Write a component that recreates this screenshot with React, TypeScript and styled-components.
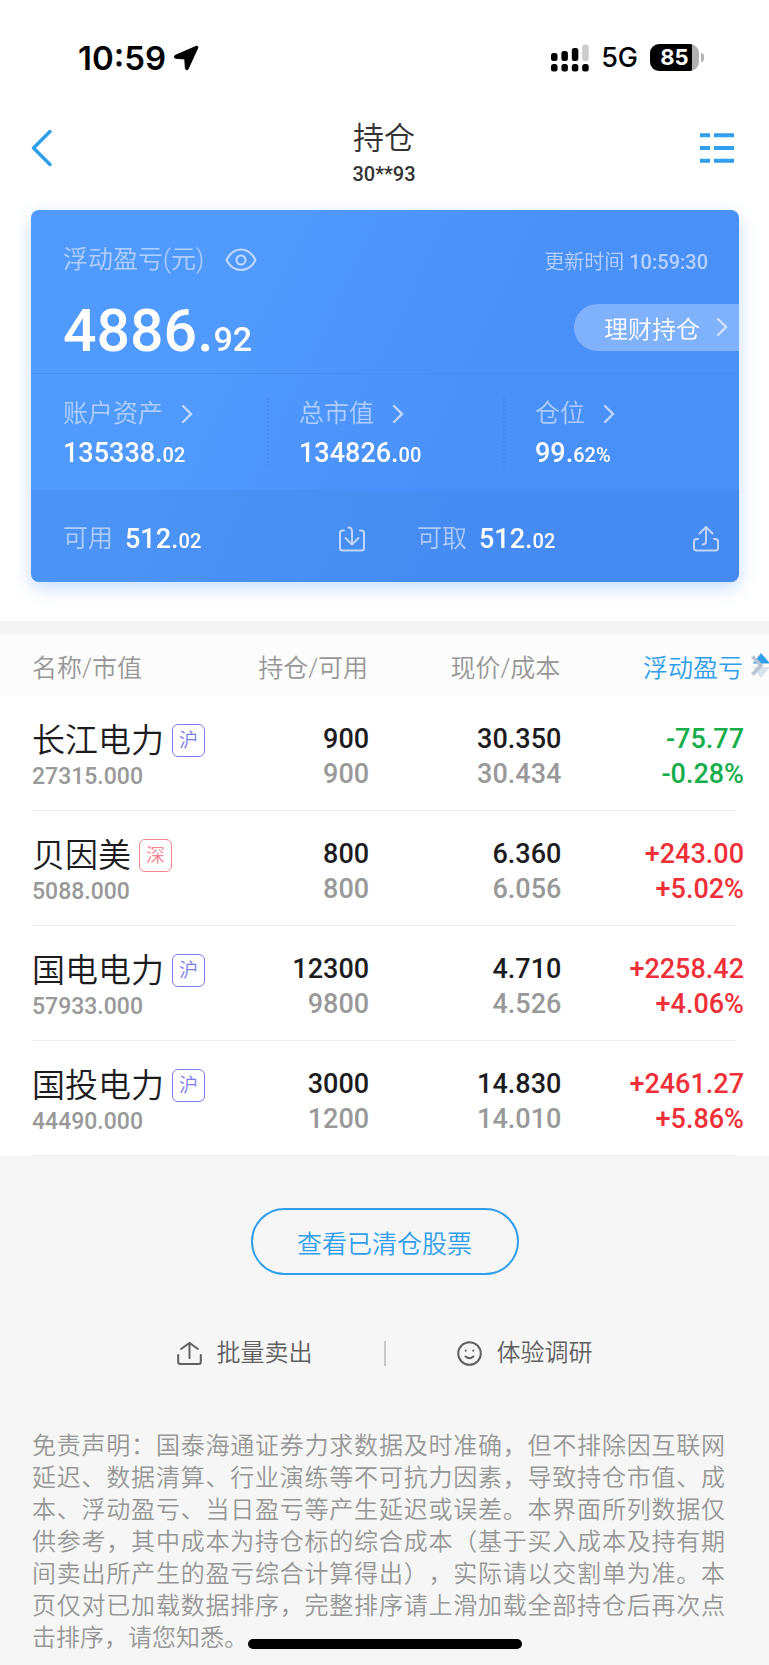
import React from "react";
import styled, { createGlobalStyle } from "styled-components";

const GlobalStyle = createGlobalStyle`
  *, *::before, *::after { box-sizing: border-box; }
  body {
    margin: 0;
    background: #f6f6f6;
    color: #1c1c1e;
    font-family: Roboto, "Noto Sans CJK SC", sans-serif;
    font-weight: 350;
  }
  button {
    margin: 0;
    padding: 0;
    border: 0;
    background: none;
    font: inherit;
    color: inherit;
    cursor: pointer;
  }
  a { color: inherit; text-decoration: none; }
  svg { display: block; flex: none; }
`;

const Page = styled.div`
  min-height: 100vh;
`;

const Top = styled.div`
  background: #fff;
  padding-bottom: 39px;
  border-bottom: 13px solid #f5f5f5;
`;

const StatusBar = styled.div`
  height: 106px;
  padding: 9px 65px 0 78px;
  display: flex;
  align-items: center;
  justify-content: space-between;
  color: #000;
  font-family: Inter, sans-serif;
`;

const StatusGroup = styled.div<{ $gap: number }>`
  display: flex;
  align-items: center;
  gap: ${(p) => p.$gap}px;
`;

const Clock = styled.span`
  font-size: 33px;
  font-weight: 600;
`;

const Network = styled.span`
  font-size: 27px;
  font-weight: 500;
`;

const Battery = styled.div`
  display: flex;
  align-items: center;
  gap: 2px;
  &::after {
    content: "";
    width: 3px;
    height: 9px;
    border-radius: 0 4px 4px 0;
    background: #b5b5b5;
  }
`;

const BatteryBody = styled.div`
  width: 49px;
  height: 27px;
  border-radius: 9px;
  background: linear-gradient(90deg, #000 42px, #b0b0b0 42px);
  color: #fff;
  font-size: 22px;
  line-height: 27px;
  font-weight: 700;
  text-align: center;
`;

const NavBar = styled.header`
  height: 104px;
  padding: 0 32px 20px 31px;
  display: grid;
  grid-template-columns: 1fr auto 1fr;
  align-items: center;
`;

const BackButton = styled.button`
  justify-self: start;
`;

const MenuButton = styled.button`
  justify-self: end;
  margin-right: 3px;
`;

const NavTitle = styled.div`
  padding-top: 14px;
  text-align: center;
  color: #333;
`;

const Title = styled.h1`
  margin: 0;
  font-size: 31px;
  line-height: 38px;
  font-weight: 350;
`;

const Account = styled.div`
  font-size: 20px;
  line-height: 32px;
  font-weight: 500;
`;

const Card = styled.section`
  margin: 0 30px 0 31px;
  border-radius: 8px;
  overflow: hidden;
  color: #fff;
  background: linear-gradient(115deg, #5099fd 30%, #4990f9 65%);
`;

const CardShadow = styled.div`
  filter: drop-shadow(0 6px 9px rgba(73, 144, 249, 0.3));
`;

const Summary = styled.div`
  height: 164px;
  padding: 32px 0 0 32px;
  border-bottom: 1px solid #478cf0;
`;

const SummaryHead = styled.div`
  height: 36px;
  padding-right: 31px;
  display: flex;
  align-items: center;
  justify-content: space-between;
`;

const Label = styled.span`
  font-size: 25px;
  line-height: 36px;
  color: rgba(255, 255, 255, 0.55);
`;

const LabelRow = styled.div<{ $gap: number }>`
  display: flex;
  align-items: center;
  gap: ${(p) => p.$gap}px;
`;

const Updated = styled.span`
  font-size: 20px;
  color: rgba(255, 255, 255, 0.6);
  time { font-weight: 500; }
`;

const ProfitRow = styled.div`
  margin-top: 24px;
  height: 50px;
  display: flex;
  align-items: center;
  justify-content: space-between;
`;

const Profit = styled.div`
  padding-top: 6px;
`;

const Amount = styled.span<{ $size: number; $minor: number }>`
  font-size: ${(p) => p.$size}px;
  font-weight: 500;
  white-space: nowrap;
  small { font-size: ${(p) => p.$minor}px; }
`;

const WealthLink = styled.a`
  height: 47px;
  padding: 0 11px 0 30px;
  display: flex;
  align-items: center;
  gap: 16px;
  border-radius: 24px 0 0 24px;
  background: rgba(255, 255, 255, 0.3);
  font-size: 24px;
`;

const Stats = styled.div`
  display: grid;
  grid-template: 69px / repeat(3, 1fr);
  height: 116px;
  padding-top: 24px;
`;

const Stat = styled.a`
  padding-left: 32px;
  display: flex;
  flex-direction: column;
  gap: 4px;
  & + & {
    padding-left: 30px;
    border-left: 2px dotted rgba(50, 110, 210, 0.25);
  }
`;

const StatLabel = styled.div`
  height: 32px;
  display: flex;
  align-items: center;
  gap: 18px;
`;

const StatValue = styled.span`
  line-height: 38px;
`;

const Funds = styled.div`
  display: grid;
  grid-template-columns: 1fr 1fr;
  height: 92px;
  padding-top: 5px;
  background: rgba(40, 100, 180, 0.1);
`;

const Fund = styled.div`
  padding: 0 19px 0 32px;
  display: flex;
  align-items: center;
  justify-content: space-between;
`;

const Holdings = styled.table`
  width: 100%;
  table-layout: fixed;
  border-collapse: collapse;
  background: #fff;
`;

const HeadRow = styled.tr`
  height: 62px;
  background: #fcfcfc;
`;

const HeadCell = styled.th<{ $width: number; $first?: boolean; $last?: boolean }>`
  width: ${(p) => p.$width}%;
  padding: 2px ${(p) => (p.$last ? 0 : 1)}px 0 ${(p) => (p.$first ? 32 : 0)}px;
  text-align: ${(p) => (p.$first ? "left" : "right")};
  font-size: 25px;
  font-weight: 350;
  color: #969696;
  white-space: nowrap;
`;

const SortButton = styled.button`
  display: inline-flex;
  align-items: center;
  gap: 8px;
  vertical-align: middle;
  color: #309eec;
`;

const Row = styled.tr`
  height: 115px;
  background: linear-gradient(#ededed, #ededed) no-repeat 32px 100% / calc(100% - 64px) 1px;
`;

const NameCell = styled.td`
  padding: 6px 0 0 32px;
  vertical-align: middle;
`;

const NameLine = styled.div`
  display: flex;
  align-items: center;
  gap: 8px;
  font-size: 33px;
  line-height: 40px;
  white-space: nowrap;
`;

const tagColors = { 沪: "#7b7cf0", 深: "#fb8490" };

const Tag = styled.span<{ $market: keyof typeof tagColors }>`
  width: 33px;
  height: 33px;
  border: 1px solid currentColor;
  border-radius: 6px;
  color: ${(p) => tagColors[p.$market]};
  font-size: 19px;
  line-height: 31px;
  text-align: center;
`;

const MarketValue = styled.div`
  font-size: 23px;
  line-height: 32px;
  font-weight: 500;
  color: #999;
`;

const NumberCell = styled.td<{ $last?: boolean }>`
  padding: 6px ${(p) => (p.$last ? 25 : 0)}px 0 0;
  text-align: right;
  vertical-align: middle;
`;

const tones = { dark: "#1c1c1e", gray: "#999", down: "#15ae4b", up: "#f03038" };

const Figure = styled.div<{ $tone: keyof typeof tones }>`
  font-size: 27px;
  line-height: 35px;
  font-weight: 500;
  color: ${(p) => tones[p.$tone]};
`;

const Footer = styled.footer`
  padding: 52px 32px 11px;
`;

const ClearedButton = styled.button`
  display: block;
  width: 268px;
  height: 67px;
  margin: 0 auto;
  border: 2px solid #309eec;
  border-radius: 34px;
  color: #309eec;
  font-size: 25px;
`;

const Actions = styled.nav`
  margin-top: 62px;
  height: 32px;
  display: flex;
  align-items: center;
  justify-content: center;
  gap: 71px;
  color: #606060;
`;

const ActionLink = styled.a`
  display: flex;
  align-items: center;
  gap: 15px;
  font-size: 24px;
  line-height: 32px;
`;

const Divider = styled.span`
  width: 2px;
  height: 25px;
  background: #c8c8c8;
`;

const Disclaimer = styled.p`
  margin: 61px 12px 0 0;
  font-size: 24px;
  line-height: 32px;
  text-align: justify;
  text-spacing-trim: space-all;
  color: #969696;
`;

const HomeIndicator = styled.div`
  position: fixed;
  left: 0;
  right: 0;
  bottom: 16px;
  width: 274px;
  height: 10px;
  margin: 0 auto;
  border-radius: 5px;
  background: #000;
`;

const Chevron = () => (
  <svg width="12" height="20" viewBox="0 0 12 20" fill="none" stroke="#fff" strokeOpacity="0.65" strokeWidth="2.4">
    <path d="M2 2l8 8-8 8" strokeLinecap="round" />
  </svg>
);

const FundIcon = ({ out }: { out?: boolean }) => (
  <svg width="28" height="28" viewBox="0 0 28 28" fill="none" stroke="#fff" strokeOpacity="0.65" strokeWidth="2" strokeLinecap="round" strokeLinejoin="round">
    {out ? (
      <>
        <path d="M6 14H4.500Q2 14 2 16.500V23Q2 25.500 4.500 25.500H23.500Q26 25.500 26 23V16.500Q26 14 23.500 14H22" />
        <path d="M7.500 8.500L14 2l6.500 6.500M14 3v13q0 3.500-3.500 3.500" />
      </>
    ) : (
      <>
        <path d="M6 5.500H4.500Q2 5.500 2 8V23Q2 25.500 4.500 25.500H23.500Q26 25.500 26 23V8Q26 5.500 23.500 5.500H22" />
        <path d="M7.500 13l6.500 6.500 6.500-6.500M14 19V6.500q0-4-3.500-4" />
      </>
    )}
  </svg>
);

type Holding = {
  name: string;
  market: keyof typeof tagColors;
  value: string;
  held: string;
  available: string;
  price: string;
  cost: string;
  profit: string;
  rate: string;
};

const holdings: Holding[] = [
  { name: "长江电力", market: "沪", value: "27315.000", held: "900", available: "900", price: "30.350", cost: "30.434", profit: "-75.77", rate: "-0.28%" },
  { name: "贝因美", market: "深", value: "5088.000", held: "800", available: "800", price: "6.360", cost: "6.056", profit: "+243.00", rate: "+5.02%" },
  { name: "国电电力", market: "沪", value: "57933.000", held: "12300", available: "9800", price: "4.710", cost: "4.526", profit: "+2258.42", rate: "+4.06%" },
  { name: "国投电力", market: "沪", value: "44490.000", held: "3000", available: "1200", price: "14.830", cost: "14.010", profit: "+2461.27", rate: "+5.86%" },
];

const stats = [
  { label: "账户资产", major: "135338.", minor: "02" },
  { label: "总市值", major: "134826.", minor: "00" },
  { label: "仓位", major: "99.", minor: "62%" },
];

export default function App() {
  return (
    <Page>
      <GlobalStyle />
      <Top>
        <StatusBar>
          <StatusGroup $gap={7}>
            <Clock>10:59</Clock>
            <svg width="26" height="26" viewBox="0 0 26 26">
              <path d="M23.500 1.200L2 10.500Q0.200 12.200 2.500 13.200L11.800 14L12.400 23.500Q13.200 26 15 24.200L24.800 2.800Q25.200 0.700 23.500 1.200Z" fill="#000" stroke="#000" strokeLinejoin="round" />
            </svg>
          </StatusGroup>
          <StatusGroup $gap={12}>
            <svg width="38" height="28" viewBox="0 0 38 28">
              <rect x="0" y="9" width="6.500" height="8" rx="2.500" />
              <rect x="10.400" y="7" width="6.500" height="10" rx="2.500" />
              <rect x="20.800" y="4" width="6.500" height="13" rx="2.500" />
              <rect x="31.200" y="0.500" width="6.500" height="16.500" rx="2.500" fill="#ccc" />
              <rect x="0" y="20" width="6.500" height="7.500" rx="2.500" />
              <rect x="10.400" y="20" width="6.500" height="7.500" rx="2.500" />
              <rect x="20.800" y="20" width="6.500" height="7.500" rx="2.500" />
              <rect x="31.200" y="20" width="6.500" height="7.500" rx="2.500" />
            </svg>
            <Network>5G</Network>
            <Battery>
              <BatteryBody>85</BatteryBody>
            </Battery>
          </StatusGroup>
        </StatusBar>
        <NavBar>
          <BackButton type="button" aria-label="返回">
            <svg width="22" height="38" viewBox="0 0 22 38" fill="none" stroke="#309eec" strokeWidth="3.500">
              <path d="M19 2.500L2.500 19 19 35.500" strokeLinecap="round" strokeLinejoin="round" />
            </svg>
          </BackButton>
          <NavTitle>
            <Title>持仓</Title>
            <Account>30**93</Account>
          </NavTitle>
          <MenuButton type="button" aria-label="菜单">
            <svg width="34" height="30" viewBox="0 0 34 30" fill="none" stroke="#309eec" strokeWidth="4">
              <path d="M0 2.200h10M14 2.200h20M0 15h10M14 15h20M0 27.800h10M14 27.800h20" />
            </svg>
          </MenuButton>
        </NavBar>

        <CardShadow>
          <Card>
            <Summary>
              <SummaryHead>
                <LabelRow $gap={21}>
                  <Label>浮动盈亏(元)</Label>
                  <svg width="32" height="24" viewBox="0 0 32 24" fill="none" stroke="#fff" strokeOpacity="0.65" strokeWidth="2">
                    <path d="M1.500 12C5 5 10 1.500 16 1.500S27 5 30.500 12C27 19 22 22 16 22S5 19 1.500 12Z" strokeLinejoin="round" />
                    <circle cx="16" cy="12" r="4.500" />
                  </svg>
                </LabelRow>
                <Updated>
                  更新时间 <time>10:59:30</time>
                </Updated>
              </SummaryHead>
              <ProfitRow>
                <Profit>
                  <Amount $size={59} $minor={34}>
                    4886.<small>92</small>
                  </Amount>
                </Profit>
                <WealthLink href="#wealth">
                  理财持仓
                  <Chevron />
                </WealthLink>
              </ProfitRow>
            </Summary>
            <Stats>
              {stats.map((s) => (
                <Stat key={s.label} href="#detail">
                  <StatLabel>
                    <Label>{s.label}</Label>
                    <Chevron />
                  </StatLabel>
                  <StatValue>
                    <Amount $size={27} $minor={20}>
                      {s.major}
                      <small>{s.minor}</small>
                    </Amount>
                  </StatValue>
                </Stat>
              ))}
            </Stats>
            <Funds>
              <Fund>
                <LabelRow $gap={12}>
                  <Label>可用</Label>
                  <Amount $size={27} $minor={20}>
                    512.<small>02</small>
                  </Amount>
                </LabelRow>
                <button type="button" aria-label="转入">
                  <FundIcon />
                </button>
              </Fund>
              <Fund>
                <LabelRow $gap={12}>
                  <Label>可取</Label>
                  <Amount $size={27} $minor={20}>
                    512.<small>02</small>
                  </Amount>
                </LabelRow>
                <button type="button" aria-label="转出">
                  <FundIcon out />
                </button>
              </Fund>
            </Funds>
          </Card>
        </CardShadow>
      </Top>

      <Holdings>
        <thead>
          <HeadRow>
            <HeadCell $width={30} $first>名称/市值</HeadCell>
            <HeadCell $width={18}>持仓/可用</HeadCell>
            <HeadCell $width={25}>现价/成本</HeadCell>
            <HeadCell $width={27} $last>
              <SortButton type="button">
                浮动盈亏
                <svg width="18" height="26" viewBox="0 0 18 26">
                  <path d="M10 0L19 10.500H2Z" fill="#309eec" />
                  <path d="M10 25L19 14H2Z" fill="#dbe4ee" />
                  <path d="M1.500 3.500l8.500 9-8.500 9" fill="none" stroke="#b9c3d3" strokeWidth="3.500" />
                </svg>
              </SortButton>
            </HeadCell>
          </HeadRow>
        </thead>
        <tbody>
          {holdings.map((h) => {
            const tone = h.profit.startsWith("-") ? "down" : "up";
            return (
              <Row key={h.name}>
                <NameCell>
                  <NameLine>
                    {h.name}
                    <Tag $market={h.market}>{h.market}</Tag>
                  </NameLine>
                  <MarketValue>{h.value}</MarketValue>
                </NameCell>
                <NumberCell>
                  <Figure $tone="dark">{h.held}</Figure>
                  <Figure $tone="gray">{h.available}</Figure>
                </NumberCell>
                <NumberCell>
                  <Figure $tone="dark">{h.price}</Figure>
                  <Figure $tone="gray">{h.cost}</Figure>
                </NumberCell>
                <NumberCell $last>
                  <Figure $tone={tone}>{h.profit}</Figure>
                  <Figure $tone={tone}>{h.rate}</Figure>
                </NumberCell>
              </Row>
            );
          })}
        </tbody>
      </Holdings>

      <Footer>
        <ClearedButton type="button">查看已清仓股票</ClearedButton>
        <Actions>
          <ActionLink href="#sell">
            <svg width="25" height="25" viewBox="0 0 25 25" fill="none" stroke="currentColor" strokeWidth="2" strokeLinecap="round">
              <path d="M1.200 14V21Q1.200 23 3.200 23H21.800Q23.800 23 23.800 21V14M12.500 17V2M4 8l8.500-6 8.500 6" />
            </svg>
            批量卖出
          </ActionLink>
          <Divider />
          <ActionLink href="#survey">
            <svg width="25" height="25" viewBox="0 0 25 25" fill="none" stroke="currentColor" strokeWidth="2" strokeLinecap="round">
              <circle cx="12.500" cy="12.500" r="11.300" />
              <path d="M8.500 15.500Q12.500 19 16.500 15.500M8.700 9.500v.2M16.300 9.500v.2" />
            </svg>
            体验调研
          </ActionLink>
        </Actions>
        <Disclaimer>
          免责声明：国泰海通证券力求数据及时准确，但不排除因互联网延迟、数据清算、行业演练等不可抗力因素，导致持仓市值、成本、浮动盈亏、当日盈亏等产生延迟或误差。本界面所列数据仅供参考，其中成本为持仓标的综合成本（基于买入成本及持有期间卖出所产生的盈亏综合计算得出），实际请以交割单为准。本页仅对已加载数据排序，完整排序请上滑加载全部持仓后再次点击排序，请您知悉。
        </Disclaimer>
      </Footer>
      <HomeIndicator />
    </Page>
  );
}
